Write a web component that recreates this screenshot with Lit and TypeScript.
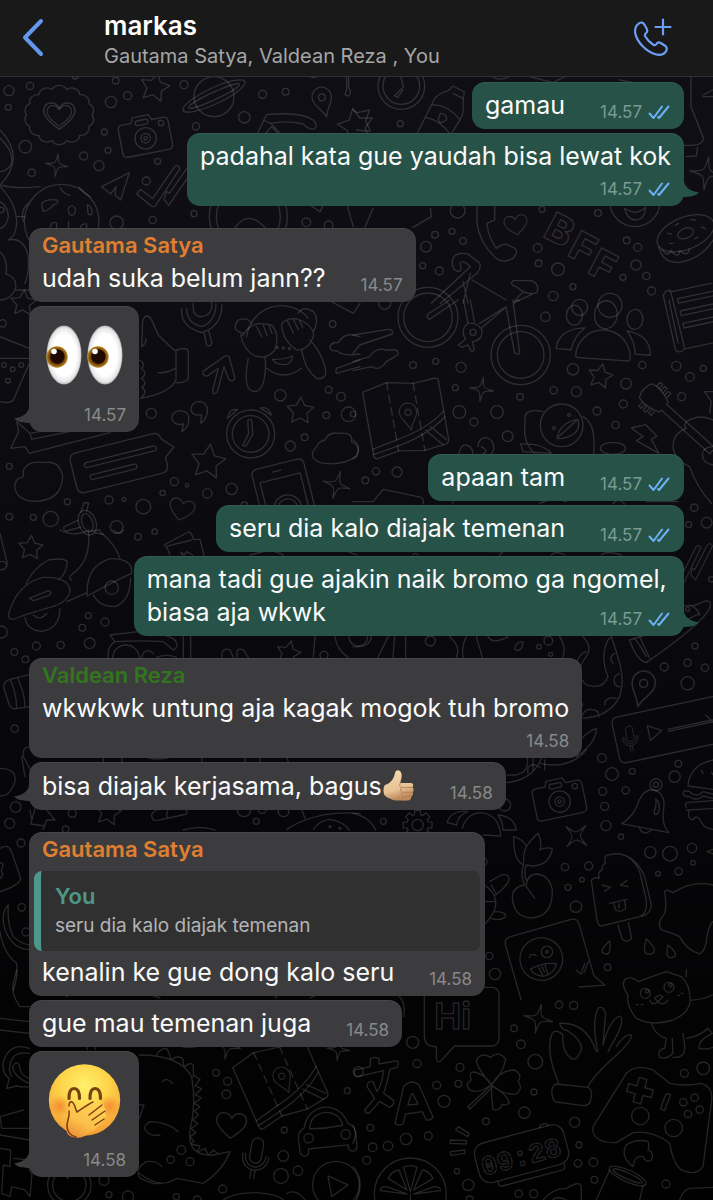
import { LitElement, html, css, svg, nothing } from "lit";
import type { TemplateResult } from "lit";
import { customElement, property } from "lit/decorators.js";

/* ---------- wallpaper motifs ---------- */

type Dot = [number, number, number];
const dots = (list: Dot[]) => list.map(([x, y, r]) => svg`<circle cx=${x} cy=${y} r=${r}></circle>`);
const line = (d: string) => svg`<path d=${d}></path>`;
const place = (x: number, y: number, rot: number, scale: number, content: unknown) =>
  svg`<g transform="translate(${x} ${y}) rotate(${rot}) scale(${scale})">${content}</g>`;
const polar = (r: number, a: number) => `${(r * Math.sin(a)).toFixed(1)} ${(-r * Math.cos(a)).toFixed(1)}`;

const star = (x: number, y: number, r: number, rot = 0) => {
  const pts = Array.from({ length: 10 }, (_, i) => polar(i % 2 ? r * 0.5 : r, (i * Math.PI) / 5));
  return place(x, y, rot, 1, line(`M${pts.join("L")}Z`));
};
const spark = (x: number, y: number, r: number, rot = 0) => {
  const k = r * 0.22;
  return place(x, y, rot, 1, line(
    `M0 ${-r}Q${k / 2} ${-k} ${k} ${-k}Q${k} ${-k / 2} ${r} 0Q${k} ${k / 2} ${k} ${k}Q${k / 2} ${k} 0 ${r}Q${-k / 2} ${k} ${-k} ${k}Q${-k} ${k / 2} ${-r} 0Q${-k} ${-k / 2} ${-k} ${-k}Q${-k / 2} ${-k} 0 ${-r}Z`));
};
const heart = (x: number, y: number, s: number, rot = 0) =>
  place(x, y, rot, s, line("M0 36C-20 22 -46 2 -40 -18C-35 -36 -10 -38 0 -18C10 -38 35 -36 40 -18C46 2 20 22 0 36Z"));
const pin = (x: number, y: number, s: number, rot = 0) =>
  place(x, y, rot, s, svg`<path d="M0 50C-8 22 -29 12 -29 -12A29 29 0 0 1 29 -12C29 12 8 22 0 50Z"></path><circle cy="-10" r="10"></circle>`);
const camera = (x: number, y: number, rot: number) =>
  place(x, y, rot, 1, svg`<path d="M-64 -42H-34L-28 -58H22L28 -42H62Q76 -42 76 -28V42Q76 56 62 56H-62Q-76 56 -76 42V-28Q-76 -42 -64 -42Z"></path>
    <rect x="-22" y="-46" width="38" height="14" rx="5"></rect><circle cy="10" r="32"></circle><circle cy="10" r="14"></circle><circle cy="10" r="5"></circle><circle cx="54" cy="-26" r="8"></circle>`);
const mapSheet = (x: number, y: number, rot: number) =>
  place(x, y, rot, 1, svg`<path d="M-112 -92L-36 -108L42 -92L108 -96Q118 -96 118 -86V92Q118 100 108 104L42 112L-36 100L-102 112Q-112 112 -112 102Z"></path>
    <path d="M-36 -108V100M42 -92V112" stroke-dasharray="22 16"></path><path d="M-112 82L-34 66Q60 50 118 6M-112 98L-30 84Q60 68 118 24M54 52L98 104M70 44L112 92"></path>${pin(12, 0, 0.9)}`);
const bars = (x: number, y: number, rot: number) =>
  place(x, y, rot, 1, svg`<path d="M-128 -60H108Q130 -60 130 -40L162 -6L130 18V40Q130 62 108 62H-128Q-150 62 -150 40V-38Q-150 -60 -128 -60Z"></path><rect x="-112" y="-24" width="222" height="15" rx="8"></rect><rect x="-104" y="15" width="144" height="15" rx="8"></rect>`);
const mic = (x: number, y: number, s: number, rot = 0) =>
  place(x, y, rot, s, svg`<rect x="-18" y="-62" width="36" height="78" rx="18"></rect><path d="M-40 -8Q-40 34 0 38Q40 34 40 -8M-32 -10Q-30 26 0 28Q30 26 32 -10M-6 38V64M6 38V64"></path>`);
const people = (x: number, y: number, s: number, rot: number) =>
  place(x, y, rot, s, svg`<path d="M-82 62A82 82 0 0 1 82 62Q82 68 72 68H-72Q-82 68 -82 62Z"></path><path d="M-142 46Q-138 -14 -60 -22Q-92 6 -96 46ZM142 46Q138 -14 66 -22Q92 6 96 46Z"></path>
    <ellipse cy="-66" rx="34" ry="42"></ellipse><ellipse cx="-94" cy="-58" rx="24" ry="30"></ellipse><ellipse cx="88" cy="-58" rx="24" ry="30"></ellipse>`);
const alarm = (x: number, y: number, rot: number) =>
  place(x, y, rot, 1, svg`<circle r="72"></circle><circle r="55"></circle><path d="M-6 -38Q-6 -44 0 -44Q6 -44 6 -38V2L-14 32Q-20 38 -26 32L-6 -2ZM-34 -76Q-60 -80 -66 -52ZM34 -76Q60 -80 66 -52Z"></path>`);
const checks = (x: number, y: number, s: number, rot = 0) =>
  place(x, y, rot, s, line("M-90 32L-78 18L-42 46L24 -50Q34 -58 40 -44L-34 68Q-40 72 -46 68ZM-8 48L6 66L82 -44Q76 -60 64 -50L8 30L0 24Z"));
const gear = (x: number, y: number, r: number) => {
  const d = Array.from({ length: 8 }, (_, i) => {
    const a = (i * Math.PI) / 4;
    return [polar(r, a - 0.2), polar(r, a + 0.2), polar(r * 0.74, a + 0.28), polar(r * 0.74, a + 0.5)].join("L");
  }).join("L");
  return place(x, y, 0, 1, svg`<path d="M${d}Z"></path><circle r=${r * 0.38}></circle>`);
};
const scallops = (x: number, y: number, rx: number, ry: number, n: number) => {
  const p = (i: number) => `${(rx * Math.cos((i * 2 * Math.PI) / n)).toFixed(1)} ${(ry * Math.sin((i * 2 * Math.PI) / n)).toFixed(1)}`;
  let d = `M${p(0)}`;
  for (let i = 1; i <= n; i++) d += `A24 22 0 0 1 ${p(i)}`;
  return place(x, y, 0, 1, line(d + "Z"));
};
const tile = (x: number, y: number, content: unknown) => svg`<g transform="translate(${x} ${y}) scale(0.3333)">${content}</g>`;

const wallpaper = html`
  <svg class="wallpaper" viewBox="0 0 713 1200" preserveAspectRatio="xMidYMin slice" aria-hidden="true">
    ${tile(0, 70, svg`
      ${dots([[27,62,15],[90,48,11],[25,112,9],[347,32,10],[383,77,12],[333,96,17],[552,44,12],[788,73,12],[857,65,10],[733,142,17],[588,169,11],[313,186,9],[324,241,9],[76,230,19],[251,258,12],[297,287,15],[95,308,11],[473,274,9],[439,333,12],[350,458,20],[458,450,11],[582,431,9],[919,457,13],[986,466,13],[226,18,9]])}
      ${scallops(178, 135, 98, 78, 14)}${heart(178, 136, 1.15)}${heart(178, 136, 0.9)}
      ${camera(435, 195, -11)}${star(464, 52, 46, 12)}${pin(968, 92, 1, -14)}${star(1068, 170, 56, -10)}${spark(170, 285, 34, 8)}
      <circle cx="642" cy="80" r="60"></circle>
      ${place(642, 78, -25, 1, svg`<ellipse rx="102" ry="24"></ellipse><ellipse rx="84" ry="11"></ellipse>`)}
      ${line("M770 196L800 134Q900 124 940 150Q956 166 944 176Q930 182 910 162Q860 150 812 160L790 150M812 160L850 200M795 192L815 170L836 192")}
      ${line("M305 350L388 308L362 390L345 374L348 350L332 372Z")}${checks(500, 340, 1, 0)}
      <circle cx="745" cy="440" r="117"></circle><circle cx="745" cy="440" r="96"></circle>
      ${line("M700 480Q745 410 800 480M930 400L975 395L960 425L930 405M1040 400L1060 470")}
      ${line("M0 180Q40 220 40 265Q36 310 0 345Q50 358 120 350M0 205Q40 240 35 280Q20 305 0 305M0 350Q50 400 50 460Q48 500 25 510Q70 500 84 555Q90 600 75 640M50 440L74 440M0 395Q25 410 25 440Q20 470 0 475M0 545Q25 570 18 612Q56 625 45 660Q30 690 0 690M45 660H88")}
      ${dots([[185, 455, 112], [4, 420, 8]])}
      ${line("M125 400Q140 385 172 390Q178 400 160 405Q150 420 130 425ZM180 352Q190 372 210 376M238 352Q250 370 270 380M205 415Q215 400 226 415Q228 435 215 436Q205 434 205 415ZM262 405Q278 410 276 430Q272 440 264 430ZM85 400Q60 420 70 455M150 475Q155 450 170 460V475M205 475L206 455M240 475Q245 460 260 462V475")}
      ${line("M930 20Q960 30 950 0M1040 5V60Q1030 78 1044 78Q1058 70 1046 52V20")}
    `)}
    ${tile(353, 70, svg`
      ${dots([[142,161,9],[219,530,16],[246,494,10],[297,484,9],[330,513,10],[209,587,9],[259,603,12],[314,422,22],[567,418,9],[735,429,10],[554,534,13],[557,580,10],[615,598,19],[601,678,14],[660,650,9],[821,511,10],[854,532,12],[849,585,15],[810,622,9],[880,618,11],[896,663,12],[680,712,24],[771,706,36]])}
      <circle cx="145" cy="48" r="70"></circle><circle cx="145" cy="48" r="55"></circle>
      ${line("M140 10L152 50L124 78L134 82L150 60M0 120L12 128L50 120L38 152L52 184L10 180M190 195L246 84Q262 68 286 62L300 48L334 66L330 95Q334 130 322 148L290 200M238 105Q280 100 320 148M300 70L330 85M218 142Q260 150 290 190M262 130Q285 132 280 150Q260 166 256 148Z")}
      ${line("M1014 20V110L1050 200Q1056 222 1020 226L990 226M1000 260L1030 258L1034 232M1050 75L1078 60M1050 80H1080M400 5Q440 50 490 5M530 20L600 38L640 18M800 30L855 40")}
      ${spark(1060, 310, 50, 8)}
      <circle cx="846" cy="395" r="75"></circle>${line("M815 415Q850 440 878 412Q876 450 846 450Q822 448 815 415Z")}
      ${line("M372 410V460Q380 520 430 565Q450 582 480 565Q498 545 485 535L460 522Q440 525 430 535Q405 500 402 460L425 450V410")}
      ${heart(489, 464, 0.85, -8)}
      <g font-family="Inter, sans-serif" font-weight="800" font-size="118"><text transform="translate(566 498) rotate(28)">B</text><text transform="translate(640 554) rotate(28)">F</text><text transform="translate(700 606) rotate(28)">F</text></g>
      ${place(998, 490, -22, 1, svg`<ellipse rx="90" ry="48"></ellipse><ellipse rx="25" ry="15"></ellipse><path d="M-90 8Q-98 58 -50 74Q30 92 92 30M-84 20Q-74 50 -60 30Q-50 66 -36 42Q-20 70 -8 48M-50 -20L-40 -14M-20 -34L-8 -36M30 -32L42 -26M52 0L60 10M-56 10L-46 14M20 26L30 24"></path>`)}
      ${line("M300 565Q310 545 345 552L380 580Q386 595 372 610L262 700M300 565Q292 600 318 605Q330 600 320 580Q330 566 352 590L235 700M352 610L330 700M330 635L345 700M358 630L460 690M480 632H535Q560 640 552 668Q520 678 490 650Q468 645 480 632ZM508 668L482 695M540 672L490 695M60 415L36 472M232 415L235 440L180 472")}
    `)}
    ${tile(0, 300, svg`
      ${dots([[8,70,11],[12,195,7],[38,208,7],[64,195,7],[24,242,7],[454,340,15],[841,286,17],[986,269,10],[1023,290,13],[979,346,10],[1046,343,22],[914,412,10],[871,438,15],[998,72,10],[28,499,9],[523,545,12],[561,556,5],[488,579,8],[622,580,14],[695,567,17],[202,605,9],[327,600,12],[372,598,6],[430,620,22],[28,650,10],[100,652,9],[152,657,23],[350,681,19],[733,616,10]])}
      ${line("M0 110L88 145M0 175L88 175M88 190L40 300Q30 312 0 305")}
      ${line("M425 140L428 60Q440 36 455 60L475 105Q530 160 528 150V240Q510 280 420 295M530 150Q565 140 565 155V235Q558 250 528 248M475 218Q500 220 525 205M418 180Q440 190 425 205Q445 220 425 235Q445 250 425 262Q445 275 425 292M425 140Q440 130 438 115")}
      ${line("M545 25Q540 80 605 98Q665 80 666 15M560 25Q560 70 605 80Q648 65 648 10M580 10Q575 50 605 50Q640 45 635 5M612 96L620 135Q630 142 636 130L626 92")}
      ${line("M608 215L675 168Q690 165 690 180L705 235Q695 250 685 235L672 200L652 275Q640 290 638 270L655 205L622 228Q608 228 608 215Z")}
      <path d="M740 110A105 105 0 0 1 925 55M800 205Q850 245 905 205"></path>
      ${line("M730 105Q745 75 780 70L815 75Q840 100 825 150Q800 180 765 168Q730 150 722 105ZM770 80L785 110M790 76L802 108M808 78L816 100M845 70Q870 48 900 60Q945 80 940 110Q925 150 890 150Q845 120 845 70ZM862 62L880 98M880 58L895 88M898 62L908 82M730 100Q690 90 715 60Q740 50 755 70M940 95Q960 60 940 35Q910 15 895 40M818 178Q850 180 878 168Q875 195 850 194Q825 192 818 178ZM745 175Q730 250 750 270Q775 285 790 250Q800 210 795 172M905 150Q915 210 950 235Q985 240 975 200Q960 150 930 120")}
      ${dots([[832,142,3],[850,144,3],[868,146,3]])}
      ${line("M990 140Q995 125 1015 128Q1030 100 1060 105L1080 110M990 140Q990 155 1010 152Q1030 170 1080 162M1010 205L1080 180M1010 220L1080 200M1010 205Q1005 215 1010 220M985 0L1060 40L1080 10")}
      ${line("M540 332Q515 335 516 358Q525 378 550 372L546 395Q570 380 566 350Q560 332 540 332ZM597 304Q572 307 573 330Q580 350 605 344L602 370Q625 354 622 324Q615 304 597 304Z")}
      ${alarm(752, 402, -4)}${star(901, 333, 42, 2)}${star(624, 486, 54, 8)}${bars(366, 486, -14)}
      ${line("M50 365L90 400L400 340M50 365L56 395L32 445L75 440L88 460L330 398M90 400L95 418L230 390")}
      ${line("M70 510Q85 480 130 488Q180 480 188 530Q185 600 110 604Q50 605 44 560Q45 535 70 530ZM975 420Q985 395 1015 400Q1060 395 1055 425Q1085 440 1070 470Q1020 500 960 488Q920 470 950 440Q955 425 975 420Z")}
      ${place(852, 580, -14, 1, svg`<path d="M-80 60V-70Q-80 -90 -60 -90H60Q80 -90 80 -70V60M-62 60V-48H62V60M-18 -70H8"></path><circle cy="48" r="42"></circle><circle cy="48" r="30"></circle>`)}
      ${spark(1010, 555, 42, 16)}${heart(545, 628, 0.92, 14)}
      ${place(262, 668, -20, 1, svg`<ellipse rx="26" ry="38"></ellipse><ellipse rx="16" ry="28"></ellipse><path d="M-24 -16L-70 -12Q-76 -4 -70 2L-24 6M-8 -36L12 -60L24 -54L10 -34M10 36L34 50"></path>`)}
      ${star(70, 10, 40, 4)}
    `)}
    ${tile(353, 300, svg`
      ${dots([[577,50,14],[180,195,10],[248,184,9],[324,202,15],[307,263,9],[501,290,10],[319,336,19],[363,366,12],[432,336,19],[464,409,16],[69,514,11],[132,516,15],[37,541,10],[602,271,11],[670,275,15],[660,208,17],[819,251,16],[868,195,11],[970,198,14],[1011,231,13],[1051,205,9],[986,290,12],[811,312,12],[732,333,12],[788,375,11],[1024,623,11],[1061,668,16],[1007,674,9],[0,342,8],[95,10,18]])}
      <circle cx="225" cy="52" r="90"></circle><circle cx="225" cy="52" r="73"></circle><circle cx="503" cy="165" r="89"></circle><circle cx="503" cy="165" r="70"></circle>
      ${line("M290 0L225 42Q218 52 230 58L315 0M332 0L345 70M352 0L364 66M385 85L460 20L380 70M480 0L500 158Q494 168 484 156L460 25M480 15Q490 0 500 0M345 70Q320 90 338 118L316 135L326 142L345 135L356 156L364 150L358 125Q392 120 386 88Q370 66 345 70Z")}${dots([[360,97,9]])}
      ${people(754, 110, 1, 4)}${line("M0 105L105 88Q122 88 118 102L20 135L0 160M0 185L50 170Q70 140 100 150L130 150Q142 165 125 170L100 185Q80 215 55 200L0 212")}
      ${mapSheet(155, 348, -10)}${spark(386, 268, 36, 8)}${star(742, 229, 38, 12)}
      <circle cx="626" cy="376" r="64"></circle>${line("M612 415Q620 368 675 358Q685 400 640 412Q625 418 612 415ZM675 358L615 412M570 335Q520 325 516 350L515 400Q520 440 545 460M690 350Q730 370 722 460M503 432Q570 430 595 460L510 455Z")}${dots([[603,384,4],[648,345,4]])}
      ${line("M835 384L878 374L912 408L895 418L918 460L850 422L870 410Z")}
      ${place(900, 292, 42, 1, svg`<path d="M-30 -28Q0 -38 44 -20V-12H240V12H44V20Q0 38 -30 28Q-44 0 -30 -28Z"></path><path d="M-14 -32V-48H-4V-32M4 -32V-48H14V-32M22 -30V-44H32V-28M-14 32V48H-4V32M4 32V48H14V32M22 30V44H32V28"></path>`)}
      ${line("M1080 360Q1040 340 1000 365Q990 380 1000 385Q960 400 960 440Q965 480 1010 500Q1030 560 1075 610M1055 275H1080M1055 275L1075 305L1070 340M1080 440Q1050 440 1048 465Q1050 490 1080 495")}
      <ellipse cx="780" cy="445" rx="38" ry="18"></ellipse>
      ${line("M318 460Q325 432 340 435Q358 440 360 460M375 440Q375 415 400 413Q425 420 422 450L415 462M390 460Q410 455 385 440M0 420Q20 430 15 455Q10 470 0 475M0 605H60L90 568L205 592Q215 600 210 612M300 612V602M560 610Q600 590 640 605M780 612Q795 590 815 612M880 605H975")}
      ${place(1010, 70, -12, 1, line("M-60 -100L-58 70Q-45 86 -30 70L-36 -110M-58 -100Q-46 -118 -36 -104H90M-20 -80H90V-66H-20ZM-20 -42H90M-20 -28H90M-20 -42V-28M-20 -4H90M-20 10H90M-20 -4V10M-30 72H90M-46 -80V50"))}
    `)}
    ${tile(0, 530, svg`
      ${star(92, 54, 38, 4)}${dots([[414,20,10],[464,5,8],[265,257,9],[315,276,12],[247,293,10],[269,340,16],[109,348,12],[182,345,11],[43,366,10],[76,388,10],[4,306,18],[44,596,11],[972,376,12],[1075,320,28]])}
      ${line("M25 255Q50 160 130 142Q210 140 210 185Q200 220 150 232Q70 255 40 268Q25 268 25 255ZM88 205L145 182Q158 186 148 196L100 212ZM78 160Q105 110 145 90Q190 82 202 95Q200 130 175 150M75 262Q80 300 125 304Q180 296 180 235M100 255Q120 275 140 250M265 0Q275 90 220 130Q200 145 215 150M300 5Q345 40 360 85M200 215L262 188M262 198Q255 110 330 86Q400 85 395 130Q350 150 262 198ZM280 195Q300 232 345 230Q390 215 392 145M180 0Q220 20 255 5L300 0M340 0Q360 20 370 0M0 10L22 100Q20 120 0 120M0 95Q20 90 20 110")}
      ${dots([[335,173,20]])}
      ${line("M492 45L565 6Q575 5 580 28L600 28L612 75M496 50L575 30M510 75L500 50M545 75Q540 60 552 75L560 65L578 75M330 315L415 305Q500 310 525 330Q540 350 520 360L490 335Q430 330 345 335Q320 350 325 382M330 315L345 335M550 320V382M572 320V382M425 382Q435 350 460 370M470 382Q500 370 530 382M665 382Q665 350 690 360L700 382M712 382Q705 350 730 360L745 382M945 320L940 382M1005 320Q1010 360 1045 382")}
      <circle cx="378" cy="385" r="40"></circle>${star(865, 370, 38, 14)}
      ${line("M88 434L30 448Q8 455 12 475L28 525Q35 540 55 535L88 530M30 448Q50 490 50 535M52 442Q75 490 75 533M92 650Q65 650 70 680L92 720M750 75L810 60L850 75M1030 60L1070 75")}
    `)}
    ${tile(353, 530, svg`
      ${checks(1015, 95, 0.85, -8)}${dots([[934,411,12],[1004,398,11],[1056,413,11],[1026,348,9],[1004,460,20],[747,684,13],[976,701,10],[232,333,15],[586,332,13],[558,350,7],[593,373,6],[1075,148,8]])}
      ${line("M945 210Q1000 240 1040 220Q1080 200 1070 235Q1050 280 880 398Q850 390 830 330L960 290M845 325Q865 350 880 380M960 290L1040 250M860 320L890 385M1010 225Q1035 235 1040 255")}${dots([[1004,238,6]])}
      ${pin(869, 472, 1.2, 14)}
      ${place(945, 600, -12, 1, svg`<path d="M200 -70H-140Q-160 -70 -160 -50V50Q-160 70 -140 70H200M0 -2H200M0 4H200M120 -20L140 10"></path><path d="M-58 -26L-18 -2L-58 20Z"></path>`)}${mic(832, 625, 0.6, -8)}
      ${line("M690 320Q720 350 700 380Q660 430 700 465Q750 480 765 440Q740 380 765 330L775 320M775 320Q790 360 800 400Q815 450 800 500Q770 560 690 565M670 410Q675 370 700 365M780 400Q765 380 785 370M800 470Q780 470 785 440L800 430M755 525Q755 500 790 505M685 562Q700 525 735 545L738 560M670 545Q690 535 688 520L670 520M670 640Q710 600 730 595Q730 640 670 680M540 684V720M575 690V720M340 320Q325 350 330 382M370 320L388 382M405 320Q420 345 465 320M620 320Q640 350 630 382M485 355Q490 335 510 335Q510 360 490 362ZM105 320L75 382M125 320L120 382M158 320V382M290 320Q325 350 310 382M0 350Q50 355 55 320M180 75Q185 65 195 75M400 65H450L440 75M595 75Q610 60 635 75M745 75Q760 60 805 75")}
    `)}
    ${tile(0, 750, svg`
      ${dots([[47,171,16],[29,220,15],[217,190,12],[732,180,20],[787,178,12],[851,184,16],[769,214,9],[63,279,12],[65,472,11],[78,546,12],[197,238,10]])}
      ${line("M0 55Q50 55 45 95Q30 140 0 138M105 176L92 222L135 228L128 238M140 180L165 210H140L130 238M90 180L95 210M455 195Q460 180 480 178L550 176Q565 180 560 192L470 212Q455 212 455 195ZM505 178Q495 195 505 205M860 238Q950 180 1080 190M905 178L915 205M940 238Q960 210 990 208Q1030 215 1048 240M550 240Q600 225 645 240M0 295Q25 280 35 305L62 385Q60 405 0 425M0 340Q12 335 8 350Q0 360 8 372Q5 385 0 385M25 465Q0 490 15 540Q40 600 88 598M25 465Q20 520 40 560Q60 580 88 585M0 545Q10 610 50 640Q55 680 40 720M65 20L75 80M310 35V22M365 35V22M440 22Q470 32 510 22M605 35V22M735 22V36M780 22V36M860 22L865 36")}
      ${star(325, 188, 40, 10)}${dots([[990,230,3],[1020,235,3]])}
    `)}
    ${tile(353, 750, svg`
      ${dots([[91,214,9],[777,72,19],[838,64,9],[965,80,17],[749,124,12],[818,121,11],[755,169,12],[759,227,15],[804,260,8],[892,307,17],[951,311,22],[1017,294,14],[1020,338,7],[977,364,11],[915,371,7],[636,351,11],[707,348,12],[687,389,7],[645,412,9],[669,470,17],[409,618,11],[426,672,17],[390,335,12],[764,652,10],[455,165,18]])}
      ${camera(618, 145, -12)}${spark(670, 258, 42, 42)}${gear(194, 225, 44)}
      ${line("M560 40Q650 60 700 0M460 98Q540 90 565 25M525 70Q520 40 548 45L560 52M463 75Q530 80 523 25M0 190Q50 200 68 240M282 218Q295 180 345 184Q310 200 312 225ZM328 235Q340 190 385 188Q440 195 443 258L390 255M435 195Q485 200 490 240L450 240Q450 215 435 195")}
      ${place(890, 180, 14, 1, svg`<path d="M-72 60Q-40 30 -38 -20Q-30 -60 0 -62Q36 -56 40 -14Q44 34 72 52ZM-18 58Q0 84 20 56M10 -36Q28 -30 28 0Q20 18 14 0Q18 -16 10 -36Z"></path><circle cx="0" cy="-78" r="18"></circle><circle cx="0" cy="-78" r="8"></circle>`)}
      ${line("M1080 30Q1010 45 1005 108L1080 118M990 128Q995 118 1010 125Q1030 145 1050 125L1080 132M990 128Q990 140 1010 140Q1030 155 1050 138L1080 145M1000 158L1080 152M1000 172Q995 165 1000 158M1000 180L1080 176M1010 180Q1000 205 1020 210Q1030 190 1045 215Q1050 235 1080 238M1045 60L1050 70M1075 66L1080 74")}
      ${line("M512 345Q480 330 482 260Q515 270 520 290Q540 260 556 250Q570 290 560 300Q580 290 598 296Q590 345 540 348L520 345Q510 370 522 395M512 345Q500 370 515 405Q480 410 478 440Q480 500 535 504Q600 500 598 420Q590 375 550 372Q520 375 520 410L545 445M512 345Q510 310 520 290")}
      ${line("M388 402Q440 430 425 480Q410 510 388 530M410 395L445 375Q470 370 468 390Q460 410 428 435M415 405L430 432M425 485Q460 485 458 500Q440 515 415 505M388 455H425")}
      ${line("M760 316Q830 295 860 365L880 450Q885 490 860 500L745 528Q735 528 732 510L715 390Q725 380 740 385Q730 370 748 358Q745 345 758 340Q752 325 760 316ZM800 312Q850 320 875 380L895 465Q895 490 865 500M795 525L808 568Q825 580 836 565L826 518M748 405L772 412L755 424M822 392L802 405L825 410M770 460L822 448M782 460L788 480Q805 490 818 475L815 452M798 460V475")}
      ${line("M935 425Q940 415 960 428Q1020 390 1080 405M935 425Q942 470 935 490Q910 520 925 540Q960 550 980 560Q1000 600 1040 612Q1060 600 1062 560Q1070 520 1080 515M770 572Q775 615 760 612Q740 610 752 592ZM880 566Q915 600 900 610Q870 620 875 590ZM945 585Q975 610 965 620Q940 630 942 605ZM1062 305L1080 298M1062 305L1080 312")}
      ${place(590, 620, -16, 1, svg`<path d="M-118 100V-68Q-118 -90 -96 -90H90Q112 -90 112 -68V92L136 128L60 112"></path><circle cx="-26" cy="0" r="64"></circle><circle cx="-4" cy="-16" r="17"></circle><circle cx="-4" cy="-16" r="4"></circle><path d="M-60 -14Q-50 -28 -38 -14M-66 20Q-26 10 14 26Q-2 54 -34 52Q-60 42 -66 20ZM-40 22L-36 48M-20 20V50M-30 22L-28 40M66 62L76 76L96 48M86 74L108 46"></path>`)}
    `)}
    ${tile(0, 970, svg`
      ${dots([[648,308,10],[683,334,12],[679,373,13],[544,540,13],[512,569,11],[570,575,12],[853,480,9],[850,558,16],[894,602,14],[843,618,22],[668,657,12],[312,631,15],[327,674,9],[384,680,17],[529,680,9],[592,690,12],[1042,362,9],[1075,305,15]])}
      ${line("M88 110H60Q30 70 42 30L50 0M0 145L88 155M0 180L88 190M88 235Q30 215 10 275Q5 310 28 325L20 355L50 348Q65 352 88 350M88 250Q30 240 28 300L35 320M88 340Q40 320 38 290Q50 270 58 285L60 300Q70 320 88 325M0 440L70 420M0 440L5 475H88M0 495L88 510M0 535L32 540L30 590L10 585L5 670L30 680L35 650L75 660L90 680L96 610L88 600L85 570L40 565")}
      ${line("M418 255Q540 255 575 320Q590 400 570 480Q560 560 640 555L690 545Q670 600 610 640L530 625Q480 660 418 610M470 255Q480 235 500 235Q510 250 512 270M512 270Q530 255 548 265L552 292M552 292Q570 275 580 285V320M580 315L600 328L585 348L605 356L585 374L604 384L583 400L600 410L582 424L596 434L578 450L594 460L574 476L588 488L570 500L582 514L572 522L600 528L592 546L615 535L625 556L640 540L655 552M488 335Q500 320 518 340M418 405H432L418 445M535 485Q500 455 450 455Q425 470 440 485Q455 500 480 495M485 590Q470 570 440 575Q410 590 415 615Q418 630 460 640Q500 645 530 625M262 238V228M286 238V228M530 225Q565 240 605 225")}
      ${spark(682, 228, 40, 10)}${spark(1015, 238, 34, 6)}${mapSheet(838, 332, -24)}${heart(694, 465, 1.1, 4)}${mic(766, 564, 0.98, 10)}
      ${place(980, 485, -6, 1, svg`<path d="M-86 30Q-92 -6 -66 -18Q-52 -70 0 -74Q52 -70 66 -18Q92 -6 86 30V56Q76 76 60 58V46H-60V58Q-72 76 -86 56ZM-50 -14Q-44 -54 0 -58Q44 -54 50 -14Q0 -8 -50 -14Z"></path><circle cx="-56" cy="14" r="14"></circle><circle cx="56" cy="14" r="14"></circle>`)}
      <circle cx="1008" cy="644" r="70"></circle>${line("M984 618L1044 645L995 680Z")}
      <circle cx="208" cy="645" r="65"></circle><circle cx="208" cy="645" r="50"></circle>
      ${line("M195 615L203 625L210 615M670 690Q700 668 770 668Q830 672 850 690M860 670Q890 655 915 690M200 80L210 72M450 74L480 84M820 72L830 84M930 84L950 74M540 72Q565 82 580 72")}
    `)}
    ${tile(353, 970, svg`
      ${dots([[179,217,18],[192,281,12],[321,292,12],[316,341,10],[251,346,12],[273,394,18],[504,223,13],[483,175,10],[547,275,22],[543,366,9],[514,428,17],[399,454,10],[618,104,11],[662,106,12],[226,498,12],[159,507,17],[105,528,14],[59,532,13],[52,473,10],[41,571,12],[312,604,8],[346,645,17],[665,457,15],[678,525,9],[675,580,11],[721,577,13],[724,629,10],[994,310,12],[1051,295,19],[862,438,26],[962,474,26],[991,397,11],[1025,383,11],[1040,419,11],[1005,432,11],[939,642,12],[497,671,11],[542,671,12],[350,688,10]])}
      ${line("M390 52H420Q438 56 438 75V205Q438 228 415 228H305L262 274Q250 278 250 265V230Q215 230 214 200V74M130 72Q160 90 152 140")}
      <g font-family="Inter, sans-serif" font-weight="700"><text x="244" y="178" font-size="108">Hi</text><text transform="translate(392 618) rotate(-15)" font-size="82" font-weight="600" stroke-dasharray="14 5" font-family="Liberation Mono, monospace">09:28</text></g>
      ${spark(556, 146, 44, 12)}
      ${line("M5 300Q0 315 12 320L92 302Q85 350 72 365L60 335Q45 330 42 350L65 385L35 420Q40 435 50 428L80 395L110 412Q125 405 122 392L92 370Q105 330 110 298L132 292Q140 280 132 272L78 282V266Q65 258 52 266V290Z")}
      ${line("M126 460L152 350Q175 325 198 345L240 440Q235 452 220 450L208 425L158 432L150 462Q135 470 126 460ZM165 405Q175 365 180 372L195 402Z")}
      ${line("M415 345Q370 290 370 270Q385 245 412 262Q440 240 458 268Q450 310 415 345Q440 300 485 300Q510 315 495 335Q512 355 490 372Q450 375 415 345Q470 380 468 400Q455 410 448 402Q440 425 420 418Q415 380 415 345ZM415 345Q370 375 348 358Q335 340 355 330Q345 305 365 306Q400 315 415 345L345 410L350 418L418 352")}
      ${line("M620 160Q700 155 730 245M620 160Q625 180 640 180Q690 210 685 240Q670 275 655 265Q625 245 630 195Q610 175 598 190Q575 240 618 342M735 245Q715 160 735 115Q750 105 758 130L750 225M750 225Q770 150 800 138Q815 145 795 190L765 245M790 230Q815 190 835 195Q840 210 780 265Q720 320 705 350M610 342L705 352Q722 360 712 395Q705 410 685 406L610 396Q595 390 597 360Q600 345 610 342Z")}
      ${line("M820 25Q800 40 825 75Q820 110 850 145Q900 170 960 150Q1010 130 1012 90Q1010 40 985 20L940 5L855 35Q840 20 820 25M895 158Q905 195 940 205L935 235Q910 240 920 262Q940 270 960 250L958 205M960 262Q1000 265 995 225L990 190M1000 205Q1040 200 1065 175L1078 190Q1035 210 1038 235Q1060 240 1080 232M1012 90Q1040 92 1078 75M905 85Q920 70 930 80L915 95ZM890 92Q900 110 915 95Q935 110 945 90M850 104H855M865 104H870M975 76H980M985 70H990M1000 0V20")}${dots([[877,70,15],[948,52,15],[882,64,5],[952,46,5]])}
      ${line("M720 470L820 310Q850 280 900 300L950 340Q1000 350 1045 340Q1080 350 1076 390L1050 590Q1030 620 985 600Q960 580 950 520Q900 480 840 488L790 518Q730 520 720 485Z")}
      ${place(861, 362, 14, 1, line("M-12 -38H12V-12H38V12H12V38H-12V12H-38V-12H-12Z"))}
      ${line("M940 370L953 374L934 422L922 416ZM308 480L345 500L348 490L316 470ZM292 510L340 512V522L292 520ZM292 545L335 540L336 550L294 556Z")}
      ${place(506, 552, -15, 1, svg`<rect x="-138" y="-62" width="276" height="122" rx="34"></rect><path d="M72 -62Q74 -70 90 -70Q100 -68 98 -62M-90 62V72Q-88 78 -80 78H108Q116 76 116 62"></path>`)}
      <circle cx="172" cy="672" r="108"></circle>
      ${line("M172 665L152 592Q172 582 192 592ZM162 660L105 625Q118 602 138 600ZM182 660L240 625Q228 602 208 600ZM162 672L82 662Q80 650 100 650ZM182 672L262 662Q264 650 244 650ZM172 672V690")}
      ${line("M840 590Q800 560 820 525Q850 505 885 515Q890 530 885 540Q905 545 895 570Q880 580 870 560Q845 555 840 590ZM770 600L730 690M870 648L860 690M570 690Q600 655 640 655Q680 630 685 650V690M600 690Q610 675 640 690M980 690Q990 660 1010 655L1080 652M0 590Q30 620 18 670L10 690M0 465Q15 490 0 520")}
      ${place(824, 618, 24, 1, svg`<ellipse rx="60" ry="18"></ellipse><ellipse rx="48" ry="9"></ellipse>`)}
    `)}
  </svg>`;

/* ---------- icons and emoji ---------- */

const backIcon = html`<svg width="32" height="44" viewBox="0 0 32 44" fill="none" stroke="#6498ee" stroke-width="4" stroke-linecap="round" stroke-linejoin="round" aria-hidden="true"><path d="M24 5L8 21.500L24 38"></path></svg>`;

const callIcon = html`<svg width="40" height="40" viewBox="0 0 40 40" fill="none" stroke="#6a9ff5" stroke-width="2.2" stroke-linecap="round" stroke-linejoin="round" aria-hidden="true">
  <path d="M30 1.500V16.500M22.500 9H37.500"></path>
  <path d="M6 5.300C3 7.300 1.500 11 2.300 15.500C4 24 13 33.500 22.500 36.300C27 37.500 31 36.300 33 33.300C34.300 31 34 29.200 32 27.700L27.800 25C26 24 24.500 24.300 23.500 26C22.500 27.500 21.500 27.500 20 26.500C17 24.500 14 21.500 12.300 18.500C11.500 17 11.600 16.200 13 15.200C14.500 14 14.700 12.500 13.600 10.500L11.200 6.300C10 4.300 8 4 6 5.300Z"></path></svg>`;

const readIcon = html`<svg class="ticks" width="23" height="16" viewBox="0 0 23 16" fill="none" stroke="#6cb1f5" stroke-width="2" stroke-linecap="round" stroke-linejoin="round" role="img" aria-label="Read"><path d="M1.500 9.500L5.500 14L14 2.500M10 13L11 14L20.500 2.500"></path></svg>`;

const eyesEmoji = html`<svg class="big" viewBox="0 0 84 84" role="img" aria-label="Eyes">
  <defs>
    <radialGradient id="white"><stop offset="0.700" stop-color="#ffffff"></stop><stop offset="0.920" stop-color="#e6e6e8"></stop><stop offset="1" stop-color="#a9a9ad"></stop></radialGradient>
    <radialGradient id="iris"><stop offset="0.600" stop-color="#4a2406"></stop><stop offset="0.800" stop-color="#8e5a12"></stop><stop offset="1" stop-color="#b98a22"></stop></radialGradient>
  </defs>
  ${[22, 63].map((x) => svg`<ellipse cx=${x} cy="42" rx="17.500" ry="29.500" fill="url(#white)"></ellipse>
    <circle cx=${x - 7} cy="44" r="10.700" fill="url(#iris)"></circle><circle cx=${x - 6.5} cy="43.500" r="7" fill="#1e0a02"></circle><circle cx=${x - 10} cy="38.500" r="2.800" fill="#ffffff"></circle>`)}
</svg>`;

const giggleEmoji = html`<svg class="big" viewBox="0 0 84 84" role="img" aria-label="Face with hand over mouth">
  <defs>
    <radialGradient id="face" cx="0.5" cy="0.3" r="0.750"><stop offset="0" stop-color="#fff06a"></stop><stop offset="0.450" stop-color="#fdd449"></stop><stop offset="0.850" stop-color="#f6a838"></stop><stop offset="1" stop-color="#e98a26"></stop></radialGradient>
    <radialGradient id="blush"><stop offset="0" stop-color="#f0702c" stop-opacity="0.650"></stop><stop offset="1" stop-color="#f0702c" stop-opacity="0"></stop></radialGradient>
    <linearGradient id="hand" x1="0.8" y1="0" x2="0.2" y2="1"><stop offset="0" stop-color="#ffd456"></stop><stop offset="0.600" stop-color="#fcc04a"></stop><stop offset="1" stop-color="#ee8f35"></stop></linearGradient>
  </defs>
  <circle cx="42.500" cy="42" r="35.700" fill="url(#face)"></circle>
  <circle cx="18" cy="48" r="11" fill="url(#blush)"></circle><circle cx="67" cy="48" r="11" fill="url(#blush)"></circle>
  <path d="M27 40.500C27 33 29 30.500 32 30.500C35 30.500 37.500 33 37.500 40.500M48 40.500C48 33 50 30.500 53 30.500C56 30.500 58.500 33 58.500 40.500" fill="none" stroke="#76420f" stroke-width="3.200" stroke-linecap="round"></path>
  <path d="M26 50C26 45 28 43 30 44C33 45 33 51 35 54C40 51 46 46 51 44C54 43 55 46 53 48L58 46C62 45 63 48 61 50C64 50 65 52 63 55C65 57 64 59 62 60C63 63 61 64 58 66C54 71 50 73 47 75C42 80 34 81 28 78C23 75 24 68 25 62C27 58 25 54 26 50Z" fill="url(#hand)"></path>
  <path d="M27 48C27 44 29 43 30 44C33 45 33 51 35 54C40 51 46 46 51 44M47 57L60 47M50 62L63 53M53 67L62 61M27 53C28 59 25 62 25 68C25 74 29 78 34 79" fill="none" stroke="#7e3d12" stroke-width="1.500" stroke-linecap="round"></path>
</svg>`;

const thumbEmoji = html`<svg class="thumb" width="32" height="34" viewBox="0 0 33 34" role="img" aria-label="Thumbs up">
  <defs><linearGradient id="skin" x1="0" y1="0" x2="0.3" y2="1"><stop offset="0" stop-color="#f5dcb2"></stop><stop offset="0.700" stop-color="#e8c193"></stop><stop offset="1" stop-color="#bd8a5c"></stop></linearGradient></defs>
  <path d="M2 16C5 15 8 13 10 10C12 7 12 4 13 2C14.500 0 18 0.500 19 4C20 8 18 11 18 14H28C31 14 32 16 30.500 18.500C32 20 32 22 30.500 23.500C31.500 25 31 27 29 28C29.500 30 28 32 25 32H14C10 32 8 30 5 29C2 28 0.500 26 0.500 22C0.500 19 1 17 2 16Z" fill="url(#skin)"></path>
  <path d="M18 14C16.500 15 17 18 19 18.500H30.500M19 18.500C17.500 20 18 23 20 23.500H30.500M20 23.500C18.500 25 19 28 21 28H29M21 28C19.500 29.500 20 31 21 32" fill="none" stroke="#b28252" stroke-width="0.900" stroke-linecap="round"></path>
</svg>`;

/* ---------- conversation ---------- */

interface Message {
  from: "in" | "out";
  time: string;
  body: string | TemplateResult;
  author?: string;
  tone?: "orange" | "green";
  quote?: { author: string; text: string };
  layout?: "row" | "stack" | "wrapped" | "sticker";
  startsGroup?: boolean;
  tail?: boolean;
}

const conversation: Message[] = [
  { from: "out", body: "gamau", time: "14.57" },
  { from: "out", body: "padahal kata gue yaudah bisa lewat kok", time: "14.57", layout: "stack", tail: true },
  { from: "in", author: "Gautama Satya", tone: "orange", body: "udah suka belum jann??", time: "14.57", startsGroup: true },
  { from: "in", body: eyesEmoji, time: "14.57", layout: "sticker", tail: true },
  { from: "out", body: "apaan tam", time: "14.57", startsGroup: true },
  { from: "out", body: "seru dia kalo diajak temenan", time: "14.57" },
  { from: "out", body: "mana tadi gue ajakin naik bromo ga ngomel, biasa aja wkwk", time: "14.57", layout: "wrapped", tail: true },
  { from: "in", author: "Valdean Reza", tone: "green", body: "wkwkwk untung aja kagak mogok tuh bromo", time: "14.58", layout: "stack", startsGroup: true },
  { from: "in", body: html`bisa diajak kerjasama, bagus${thumbEmoji}`, time: "14.58", tail: true },
  { from: "in", author: "Gautama Satya", tone: "orange", quote: { author: "You", text: "seru dia kalo diajak temenan" }, body: "kenalin ke gue dong kalo seru", time: "14.58", startsGroup: true },
  { from: "in", body: "gue mau temenan juga", time: "14.58" },
  { from: "in", body: giggleEmoji, time: "14.58", layout: "sticker", tail: true },
];

@customElement("chat-bubble")
export class ChatBubble extends LitElement {
  @property({ attribute: false }) message!: Message;

  static styles = css`
    :host { display: flex; }
    .bubble {
      position: relative;
      box-sizing: border-box;
      max-width: 88%;
      padding: 7px 13px;
      border-radius: 13px;
      background: #3c3c3e;
      box-shadow: inset 0 1px 0 rgba(255, 255, 255, 0.06);
      color: #fafafa;
    }
    .out { max-width: 84%; margin-left: auto; background: #265247; }
    .named { padding-top: 4px; }
    .author { height: 30px; font-size: 22px; line-height: 27px; font-weight: 600; }
    .orange { color: #e17f31; }
    .green { color: #33751f; }
    .content { display: flex; justify-content: space-between; column-gap: 35px; }
    .text { margin: 0; font-size: 25px; line-height: 33px; }
    .meta { display: flex; align-items: center; align-self: flex-end; gap: 6px; flex: none; height: 20px; color: #89898c; font-size: 17px; line-height: 20px; }
    .out .meta { color: #7a9c92; }
    .stack, .sticker { flex-direction: column; }
    .stack { row-gap: 6px; }
    .sticker .meta { margin-top: 8px; }
    .wrapped { display: flow-root; }
    .wrapped .text { display: inline; }
    .wrapped .meta { float: right; margin-top: 13px; }
    .big { display: block; width: 84px; height: 84px; }
    .thumb { vertical-align: -8px; margin-left: 1px; }
    .ticks { flex: none; }
    .quote { margin: 5px -8px; padding: 10px 15px 10px 14px; border-left: 7px solid #4e978a; border-radius: 8px; background: #303030; }
    .quote-author { margin: 0; color: #4e978a; font-size: 22px; line-height: 30px; font-weight: 600; }
    .quote-text { margin: 0; color: #b4b4b6; font-size: 19px; line-height: 30px; }
    .tail { position: absolute; left: -15px; bottom: 3px; width: 28px; height: 24px; fill: #3c3c3e; }
    .out .tail { left: auto; right: -15px; fill: #265247; transform: scaleX(-1); }
  `;

  render() {
    const m = this.message;
    return html`
      <article class="bubble ${m.from} ${m.author ? "named" : ""}">
        ${m.tail ? html`<svg class="tail" viewBox="0 0 28 24" aria-hidden="true"><path d="M15.500 0C15 8 9 12 0 13.500C4 17.500 10 18 16 18L24 23L28 0Z"></path></svg>` : nothing}
        ${m.author ? html`<div class="author ${m.tone}">${m.author}</div>` : nothing}
        ${m.quote ? html`<blockquote class="quote"><p class="quote-author">${m.quote.author}</p><p class="quote-text">${m.quote.text}</p></blockquote>` : nothing}
        <div class="content ${m.layout ?? "row"}">
          <p class="text">${m.body}</p>
          <div class="meta"><time>${m.time}</time>${m.from === "out" ? readIcon : nothing}</div>
        </div>
      </article>`;
  }
}

@customElement("app-root")
export class AppRoot extends LitElement {
  static styles = css`
    :host {
      position: relative;
      display: flex;
      flex-direction: column;
      box-sizing: border-box;
      min-height: 100vh;
      overflow: hidden;
      background: linear-gradient(#110f16, #0c0b10 40%, #060608 70%, #010102);
      font-family: Inter, "Liberation Sans", sans-serif;
    }
    .wallpaper { position: absolute; inset: 0; width: 100%; height: 100%; fill: none; stroke: rgba(255, 255, 255, 0.14); stroke-width: 4; stroke-linejoin: round; stroke-linecap: round; }
    .bar { position: relative; display: flex; align-items: center; box-sizing: border-box; height: 77px; padding: 0 40px 0 17px; border-bottom: 1px solid #303032; background: #191919; }
    .icon { display: grid; place-items: center; flex: none; padding: 0; border: 0; background: none; cursor: pointer; }
    .heading { flex: 1; min-width: 0; margin-left: 55px; padding-top: 3px; }
    .title { margin: 0; color: #fff; font-size: 26px; line-height: 32px; font-weight: 600; }
    .members { margin: 0; color: #a6a6a8; font-size: 20px; line-height: 28px; }
    .messages { position: relative; display: flex; flex-direction: column; gap: 4px; margin: 0; padding: 5px 29px 20px; list-style: none; }
    .group { margin-top: 18px; }
  `;

  render() {
    return html`
      ${wallpaper}
      <header class="bar">
        <button class="icon" type="button" aria-label="Back">${backIcon}</button>
        <div class="heading">
          <h1 class="title">markas</h1>
          <p class="members">Gautama Satya, Valdean Reza , You</p>
        </div>
        <button class="icon" type="button" aria-label="Add call">${callIcon}</button>
      </header>
      <ol class="messages">
        ${conversation.map((m) => html`<li class=${m.startsGroup ? "group" : ""}><chat-bubble .message=${m}></chat-bubble></li>`)}
      </ol>`;
  }
}
